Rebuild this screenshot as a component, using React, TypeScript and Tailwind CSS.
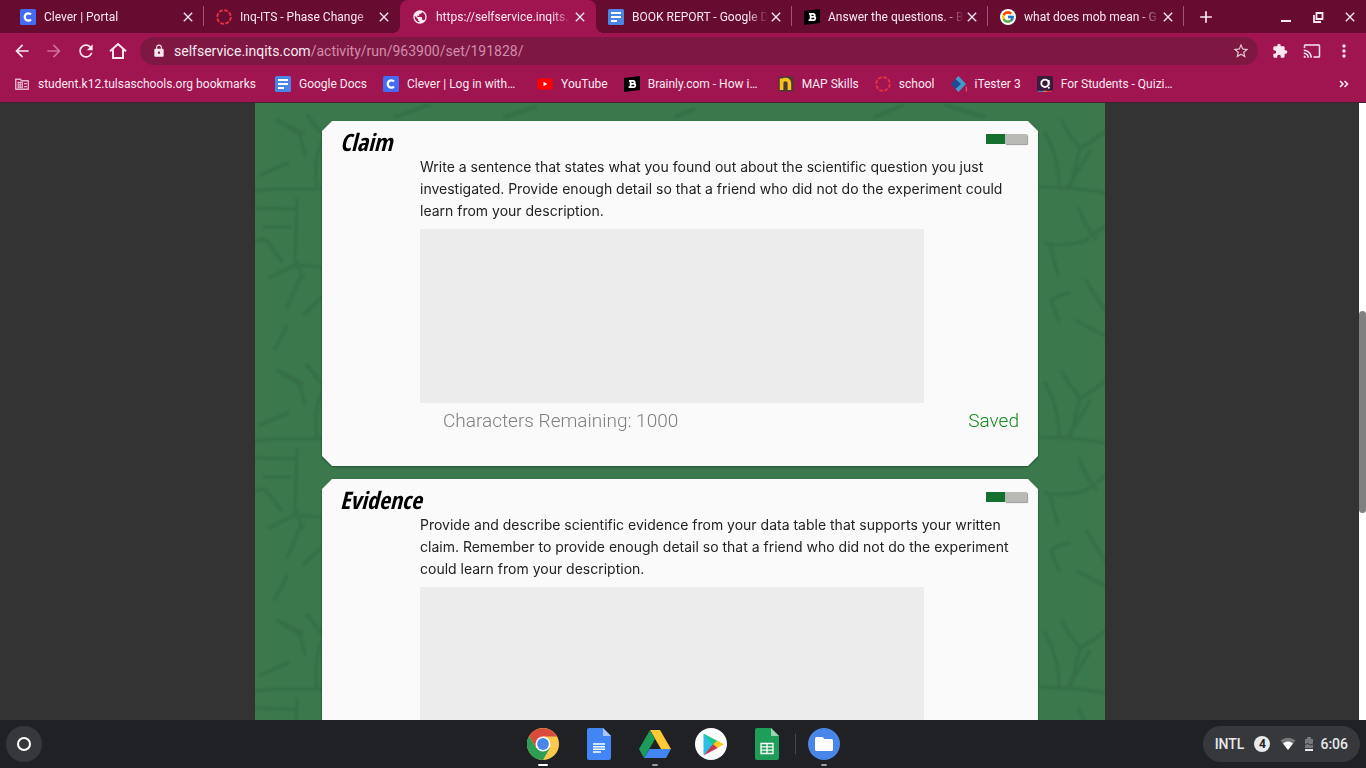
import type { ReactNode } from "react";
import clsx from "clsx";
import { FcGoogle } from "react-icons/fc";
import {
  MdAdd,
  MdArrowBack,
  MdArrowForward,
  MdCast,
  MdClose,
  MdExtension,
  MdLock,
  MdMoreVert,
  MdPublic,
  MdRefresh,
  MdStarBorder,
} from "react-icons/md";

function CleverIcon() {
  return (
    <svg viewBox="0 0 16 16" className="w-4 h-4 shrink-0">
      <rect width="16" height="16" rx="1.5" fill="#436cf2" />
      <path d="M11 5.6A3.6 3.6 0 1 0 11 10.4" fill="none" stroke="#fff" strokeWidth="2.2" />
    </svg>
  );
}

function RingIcon() {
  return (
    <svg viewBox="0 0 16 16" className="w-4 h-4 shrink-0">
      <circle cx="8" cy="8" r="6.8" fill="none" stroke="#e2333f" strokeWidth="2" strokeDasharray="3.8 1.54" />
    </svg>
  );
}

function DocsIcon() {
  return (
    <svg viewBox="0 0 16 16" className="w-4 h-4 shrink-0">
      <rect width="16" height="16" rx="1.5" fill="#4a86e8" />
      <path d="M3 4h10M3 8h10M3 12h6" stroke="#fff" strokeWidth="1.8" />
    </svg>
  );
}

function BrainlyIcon() {
  return (
    <svg viewBox="0 0 16 16" className="w-4 h-4 shrink-0">
      <path d="M0 2 16 0v14L0 16z" fill="#000" />
      <path
        d="M5 4.8h4.2a1.5 1.5 0 0 1 .6 2.9 1.7 1.7 0 0 1-.5 3.4H4.6M6.6 4.8v6.3M6.6 7.9h3"
        fill="none"
        stroke="#fff"
        strokeWidth="1.8"
      />
    </svg>
  );
}

function FolderIcon() {
  return (
    <svg viewBox="0 0 16 16" className="w-4 h-4 shrink-0">
      <path d="M1.7 3.2h4.6l1.4 1.6h6.6v8.5H1.7z" fill="none" stroke="#e3b4c8" strokeWidth="1.4" strokeLinejoin="round" />
      <path d="M3.5 6.5h5M3.5 8.8h5M3.5 11.1h5M4.2 5.5v7M6.2 5.5v7M8.4 5.5v7" stroke="#e3b4c8" strokeWidth="1.1" />
      <path d="M10 7.6h3M10 10.6h3" stroke="#e3b4c8" strokeWidth="1.4" />
    </svg>
  );
}

function YoutubeIcon() {
  return (
    <svg viewBox="0 0 16 16" className="w-4 h-4 shrink-0">
      <rect x="0.5" y="2.5" width="15" height="11" rx="2" fill="#f00" />
      <path d="M6.5 5.8v4.4L10.2 8z" fill="#fff" />
    </svg>
  );
}

function MapIcon() {
  return (
    <svg viewBox="0 0 16 16" className="w-4 h-4 shrink-0">
      <rect x="0.5" y="0.5" width="15" height="15" fill="#4b3b34" />
      <path d="M3.6 14V2.5M3.6 7c0-4.6 7.8-4.6 7.8 0v7" fill="none" stroke="#f8c21c" strokeWidth="3.6" />
    </svg>
  );
}

function ITesterIcon() {
  return (
    <svg viewBox="0 0 16 16" className="w-4 h-4 shrink-0">
      <path d="M4 3.500 7.500 0 15 8l-7.500 8L4 12.500z" fill="#3f9bc9" />
      <path d="M0 8l4.500-5L10 8l-5.500 5z" fill="#1f4b93" />
      <path d="M15.3 10.5v5" stroke="#e28a60" strokeWidth="0.8" />
    </svg>
  );
}

function QuizizzIcon() {
  return (
    <svg viewBox="0 0 16 16" className="w-4 h-4 shrink-0">
      <rect width="16" height="15" rx="1.5" fill="#3a1b3d" />
      <path d="M1 15.3h5" stroke="#2d9cdb" />
      <path d="M6 15.3h4" stroke="#f2a13c" />
      <path d="M10 15.3h5" stroke="#e0413f" />
      <circle cx="8" cy="7.3" r="3.7" fill="none" stroke="#fff" strokeWidth="1.9" />
      <path d="M11.7 4v5.5" stroke="#fff" strokeWidth="1.7" />
      <circle cx="11.8" cy="11.8" r="1" fill="#fff" />
    </svg>
  );
}

function GoogleIcon() {
  return (
    <span className="w-4 h-4 shrink-0 rounded-full bg-white flex items-center justify-center">
      <FcGoogle className="w-3.5 h-3.5" />
    </span>
  );
}

const tabs: { title: string; icon: ReactNode; active?: boolean; divider?: boolean }[] = [
  { title: "Clever | Portal", icon: <CleverIcon />, divider: true },
  { title: "Inq-ITS - Phase Change", icon: <RingIcon /> },
  { title: "https://selfservice.inqits.", icon: <MdPublic className="w-4 h-4 shrink-0" />, active: true },
  { title: "BOOK REPORT - Google D", icon: <DocsIcon />, divider: true },
  { title: "Answer the questions. - B", icon: <BrainlyIcon />, divider: true },
  { title: "what does mob mean - G", icon: <GoogleIcon />, divider: true },
];

const bookmarks = [
  { title: "student.k12.tulsaschools.org bookmarks", icon: <FolderIcon />, width: "w-[245px]" },
  { title: "Google Docs", icon: <DocsIcon /> },
  { title: "Clever | Log in with…", icon: <CleverIcon />, width: "w-[138px]" },
  { title: "YouTube", icon: <YoutubeIcon /> },
  { title: "Brainly.com - How i…", icon: <BrainlyIcon />, width: "w-[138px]" },
  { title: "MAP Skills", icon: <MapIcon /> },
  { title: "school", icon: <RingIcon /> },
  { title: "iTester 3", icon: <ITesterIcon /> },
  { title: "For Students - Quizi…", icon: <QuizizzIcon />, width: "w-[138px]" },
];

function TabStrip() {
  return (
    <div className="flex h-[33px] bg-[#680b31] pl-2">
      {tabs.map((tab) => (
        <div
          key={tab.title}
          className={clsx(
            "relative flex flex-[0_1_196px] min-w-0 items-center gap-2 pl-3 pr-2",
            tab.active && "bg-[#a01450] rounded-t-lg"
          )}
        >
          {tab.active && (
            <>
              <span className="absolute bottom-0 -left-2 w-2 h-2 bg-[radial-gradient(circle_at_0_0,transparent_8px,#a01450_8px)]" />
              <span className="absolute bottom-0 -right-2 w-2 h-2 bg-[radial-gradient(circle_at_100%_0,transparent_8px,#a01450_8px)]" />
            </>
          )}
          {tab.icon}
          <span className="flex-1 min-w-0 overflow-hidden whitespace-nowrap text-xs -mr-2 mask-r-from-85% mask-r-to-100%">
            {tab.title}
          </span>
          <button aria-label="Close tab" className="shrink-0">
            <MdClose className="w-4 h-4" />
          </button>
          {tab.divider && <span className="absolute right-0 top-1.5 w-px h-5 bg-[#a5507a]" />}
        </div>
      ))}
      <button aria-label="New tab" className="w-11 flex items-center justify-center">
        <MdAdd className="w-5 h-5" />
      </button>
      <div className="ml-auto flex items-center">
        <button aria-label="Minimize" className="w-8 h-8 flex items-center justify-center">
          <svg viewBox="0 0 16 16" className="w-4 h-4">
            <path d="M3 12h10" stroke="currentColor" strokeWidth="2" />
          </svg>
        </button>
        <button aria-label="Restore" className="w-8 h-8 flex items-center justify-center">
          <svg viewBox="0 0 16 16" className="w-4 h-4" fill="none" stroke="currentColor" strokeWidth="1.8">
            <path d="M6.5 4h6v6h-6z" />
            <path d="M4 6v7h7" />
          </svg>
        </button>
        <button aria-label="Close window" className="w-8 h-8 flex items-center justify-center">
          <MdClose className="w-4 h-4" />
        </button>
      </div>
    </div>
  );
}

function ToolButton({ label, children }: { label: string; children: ReactNode }) {
  return (
    <button aria-label={label} className="w-8 h-8 shrink-0 flex items-center justify-center">
      {children}
    </button>
  );
}

function Toolbar() {
  return (
    <div className="flex items-center h-9 bg-[#a01450] px-1.5">
      <ToolButton label="Back">
        <MdArrowBack className="w-5 h-5" />
      </ToolButton>
      <ToolButton label="Forward">
        <MdArrowForward className="w-5 h-5 text-[#cf6f98]" />
      </ToolButton>
      <ToolButton label="Reload">
        <MdRefresh className="w-5 h-5" />
      </ToolButton>
      <ToolButton label="Home">
        <svg viewBox="0 0 20 20" className="w-5 h-5" fill="none" stroke="currentColor" strokeWidth="2">
          <path d="M2 10.3 10 3l8 7.3M5 8.5V17h10V8.5" />
        </svg>
      </ToolButton>
      <div className="flex flex-1 items-center h-7 mx-1.5 rounded-full bg-[#7e1843] pl-3 pr-2">
        <MdLock className="w-3.5 h-3.5 shrink-0" />
        <a href="#" className="flex-1 pl-2 text-sm text-[#d48cac]">
          <span className="text-[#fbe9f1]">selfservice.inqits.com</span>/activity/run/963900/set/191828/
        </a>
        <button aria-label="Bookmark this page">
          <MdStarBorder className="w-[18px] h-[18px] text-[#e3c3d1]" />
        </button>
      </div>
      <ToolButton label="Extensions">
        <MdExtension className="w-4 h-4" />
      </ToolButton>
      <ToolButton label="Cast">
        <MdCast className="w-[18px] h-[18px]" />
      </ToolButton>
      <ToolButton label="Menu">
        <MdMoreVert className="w-5 h-5" />
      </ToolButton>
    </div>
  );
}

function BookmarkBar() {
  return (
    <nav className="flex items-center h-[34px] gap-4 bg-[#a01450] border-b border-[#3d2430] pl-3.5 pr-4 pb-1 text-xs">
      {bookmarks.map((b) => (
        <a key={b.title} href="#" className={clsx("flex items-center gap-2 whitespace-nowrap", b.width)}>
          {b.icon}
          {b.title}
        </a>
      ))}
      <button aria-label="More bookmarks" className="ml-auto">
        <svg viewBox="0 0 12 12" className="w-3 h-3" fill="none" stroke="currentColor" strokeWidth="1.6">
          <path d="m2 3 3 3-3 3M6.5 3l3 3-3 3" />
        </svg>
      </button>
    </nav>
  );
}

// Cracked-stone texture, tiled every 250px down the page
function Texture() {
  return (
    <svg className="absolute inset-0 w-full h-full" aria-hidden="true">
      <defs>
        <filter id="soften">
          <feGaussianBlur stdDeviation="1.2" />
        </filter>
        <pattern id="cracks" width="850" height="250" patternUnits="userSpaceOnUse">
          <g
            fill="none"
            stroke="#28553a"
            strokeOpacity="0.3"
            strokeWidth="3"
            strokeLinecap="round"
            filter="url(#soften)"
          >
            <path d="M22 17 45 32l5 20M22 17l26 13M52 12l14 18M5 72l28-12M0 88l20-2h48M0 105l40 1M42 96l-2 59 8 20M10 124h25M0 138l10-2 17 22M14 175l26-13 27 2M46 172l-14 33M67 194l-19 18M32 223 20 246M66 40q-8 20-4 46" />
            <path d="M140 14l34-12M250 14l30-10M420 14l20-8M620 14l28-12M690 2l40 12" />
            <path d="M807 18q5 12 18 27 12-6 25-17M825 45l-10 40M835 48l-22 36M790 30q14 24 14 54M786 84l40 2 24 4M824 106q5 16 17 30M790 140q20 4 40-2l20-15M795 142l8 30M831 178l22 34M796 198q6-6 18-8M796 198l8 20M822 218l30 16" />
          </g>
        </pattern>
      </defs>
      <rect width="100%" height="100%" fill="url(#cracks)" />
    </svg>
  );
}

function QuestionCard({ title, prompt }: { title: string; prompt: string }) {
  const id = title.toLowerCase();
  return (
    <div className="drop-shadow-[0_1px_1px_rgba(20,60,35,0.7)]">
      <section className="h-[345px] bg-[#fafafa] [clip-path:polygon(10px_0,calc(100%-10px)_0,100%_10px,100%_calc(100%-10px),calc(100%-10px)_100%,10px_100%,0_calc(100%-10px),0_10px)]">
        <div className="flex items-start justify-between h-[35px] pl-[18px] pr-[11px]">
          <h2 className="pt-[5px] text-2xl/8 font-bold italic text-black font-['Open_Sans_Condensed','Liberation_Sans_Narrow','Open_Sans',sans-serif]">
            {title}
          </h2>
          <div className="flex mt-[13px]">
            <span className="w-[19px] h-2.5 bg-[#15702f]" />
            <span className="w-[22px] h-2.5 rounded-r-[1px] bg-[#b9b9b5] shadow-[1px_1px_1px_#999]" />
          </div>
        </div>
        <label htmlFor={id} className="block ml-[98px] mr-6 text-sm/[22px] text-[#222] font-['Inter',sans-serif]">
          {prompt}
        </label>
        <textarea id={id} className="block ml-[98px] mt-[7px] w-[504px] h-[174px] resize-none bg-[#ececec]" />
        <div className="flex justify-between pl-[121px] pr-[19px] pt-1 text-[19px]/7 font-light font-['Roboto',sans-serif]">
          <span className="text-[#808080]">Characters Remaining: 1000</span>
          <span className="text-[#138a1c]">Saved</span>
        </div>
      </section>
    </div>
  );
}

function ShelfApp({ label, running, children }: { label: string; running?: "active" | "idle"; children: ReactNode }) {
  return (
    <button aria-label={label} className="relative w-8 h-8">
      {children}
      {running && (
        <span
          className={clsx(
            "absolute top-9 left-1/2 -translate-x-1/2 h-0.5 rounded-full",
            running === "active" ? "w-2.5 bg-white" : "w-1.5 bg-[#9a9b9d]"
          )}
        />
      )}
    </button>
  );
}

function Shelf() {
  return (
    <footer className="grid grid-cols-[1fr_auto_1fr] items-center h-12 shrink-0 bg-[#202124] px-1.5 text-[#e8eaed]">
      <button aria-label="Launcher" className="w-9 h-9 rounded-full bg-[#37383b] flex items-center justify-center">
        <span className="w-3.5 h-3.5 rounded-full border-2 border-white" />
      </button>
      <div className="flex items-center gap-6">
        <ShelfApp label="Chrome" running="active">
          <svg viewBox="0 0 32 32">
            <circle cx="16" cy="16" r="16" fill="#fbc94a" />
            <path d="M2.14 8A16 16 0 0 1 29.86 8.5H16L9.1 20z" fill="#d94b3d" />
            <path d="M2.14 8A16 16 0 0 0 16 32l6.9-12H9.1z" fill="#2e9e55" />
            <circle cx="16" cy="16" r="7.5" fill="#fff" />
            <circle cx="16" cy="16" r="5.9" fill="#4a86e8" />
          </svg>
        </ShelfApp>
        <ShelfApp label="Docs">
          <svg viewBox="0 0 32 32">
            <path d="M6 0h14l8 8v22a2 2 0 0 1-2 2H6a2 2 0 0 1-2-2V2a2 2 0 0 1 2-2z" fill="#4285f4" />
            <path d="M20 0l8 8h-8z" fill="#a9c7fa" />
            <path d="M10 16h12M10 18.7h12M10 21.3h12M10 24h8" stroke="#fff" strokeWidth="1.4" />
          </svg>
        </ShelfApp>
        <ShelfApp label="Drive" running="idle">
          <svg viewBox="0 0 32 32">
            <path d="M11 2h10l11 19H22z" fill="#fcc934" />
            <path d="M11 2 0 21l5 9 11-19z" fill="#1c9c58" />
            <path d="M10.5 21H32l-5 9H5z" fill="#4285f4" />
          </svg>
        </ShelfApp>
        <ShelfApp label="Play Store">
          <svg viewBox="0 0 32 32">
            <circle cx="16" cy="16" r="16" fill="#fff" />
            <path d="M8.5 5.5V27L20 16z" fill="#27c1e8" />
            <path d="M8.5 5.5l15 8-5 4.5z" fill="#20c58a" />
            <path d="M8.5 27.5l15-8-5-4z" fill="#c7354f" />
            <path d="M22.5 12.5l6 3.7-6 3.8-4.500-3.8z" fill="#fbc81f" />
          </svg>
        </ShelfApp>
        <ShelfApp label="Sheets">
          <svg viewBox="0 0 32 32">
            <path d="M6 0h14l8 8v22a2 2 0 0 1-2 2H6a2 2 0 0 1-2-2V2a2 2 0 0 1 2-2z" fill="#1e9e58" />
            <path d="M20 0l8 8h-8z" fill="#9ad3b4" />
            <path d="M10 15.5h12v10H10zM10 18.8h12M10 22.2h12M16 15.5v10" fill="none" stroke="#fff" strokeWidth="1.3" />
          </svg>
        </ShelfApp>
        <div className="flex items-center -ml-3 gap-3">
          <span className="w-px h-5 bg-[#47484b]" />
          <ShelfApp label="Files" running="idle">
            <svg viewBox="0 0 32 32">
              <circle cx="16" cy="16" r="16" fill="#4a86e8" />
              <path d="M8.5 9h6l2 2h7A1.5 1.5 0 0 1 25 12.5v9a1.5 1.5 0 0 1-1.5 1.5h-15A1.5 1.5 0 0 1 7 21.5v-11A1.5 1.5 0 0 1 8.5 9z" fill="#fff" />
            </svg>
          </ShelfApp>
        </div>
      </div>
      <button className="justify-self-end flex items-center h-9 rounded-full bg-[#37383b] px-3 text-sm font-medium">
        INTL
        <span className="w-4 h-4 ml-2.5 rounded-full bg-[#e8eaed] text-[#202124] text-xs/4 font-bold">4</span>
        <svg viewBox="0 0 16 16" className="w-4 h-4 ml-2.5">
          <path d="M8 14 .5 4.5a12 12 0 0 1 15 0z" fill="#77787b" />
          <path d="M8 14 3 7.5a8 8 0 0 1 10 0z" fill="#fff" />
        </svg>
        <svg viewBox="0 0 10 16" className="w-2.5 h-4 ml-2">
          <path d="M3 1h4v2h2v9H1V3h2z" fill="#77787b" />
          <path d="M1 8.5l3-1 2 1.5 3-1" stroke="#37383b" fill="none" />
          <path d="M1 13h8v2H1z" fill="#e8eaed" />
        </svg>
        <span className="ml-1.5">6:06</span>
      </button>
    </footer>
  );
}

export default function App() {
  return (
    <div className="flex flex-col h-screen overflow-hidden font-['Roboto',sans-serif]">
      <header className="shrink-0 text-[#fbe9f1]">
        <TabStrip />
        <Toolbar />
        <BookmarkBar />
      </header>
      <div className="flex flex-1 min-h-0 bg-[#333333]">
        <main className="flex-1 min-w-0 overflow-hidden">
          <div className="relative max-w-[850px] min-h-full mx-auto bg-[#3b794c]">
            <Texture />
            <div className="relative flex flex-col gap-[13px] px-[67px] pt-[18px]">
              <QuestionCard
                title="Claim"
                prompt="Write a sentence that states what you found out about the scientific question you just investigated. Provide enough detail so that a friend who did not do the experiment could learn from your description."
              />
              <QuestionCard
                title="Evidence"
                prompt="Provide and describe scientific evidence from your data table that supports your written claim. Remember to provide enough detail so that a friend who did not do the experiment could learn from your description."
              />
            </div>
          </div>
        </main>
        <div className="w-[7px] -ml-px bg-white pt-[208px]">
          <div className="h-[202px] rounded-full bg-[#808080]" />
        </div>
      </div>
      <Shelf />
    </div>
  );
}
